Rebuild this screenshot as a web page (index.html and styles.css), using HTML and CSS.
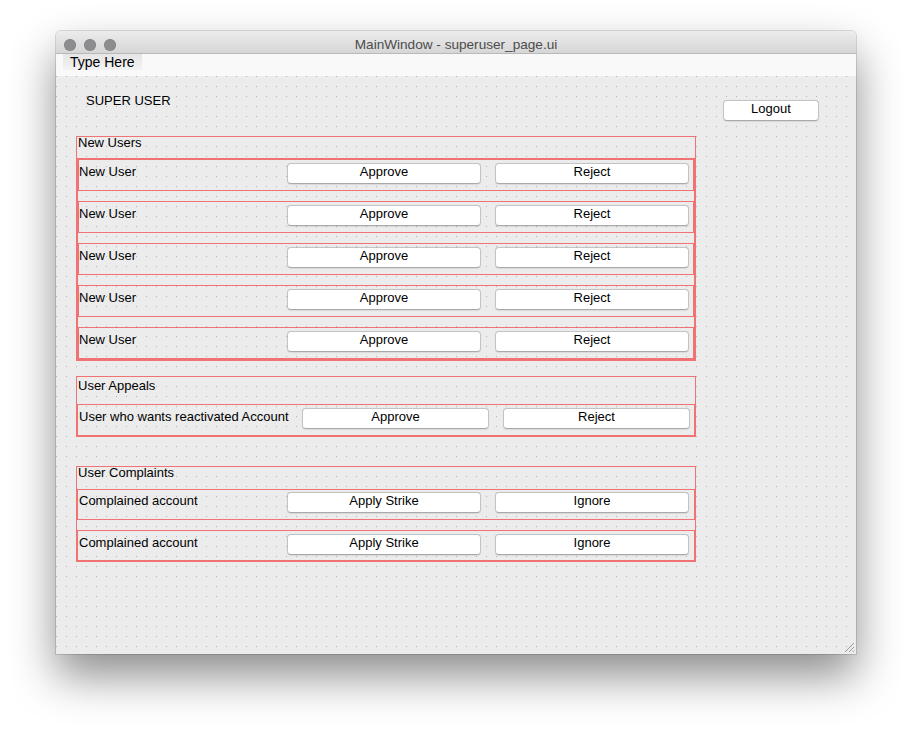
FILE: index.html
```html
<!DOCTYPE html>
<html>
<head>
<meta charset="utf-8">
<title>MainWindow - superuser_page.ui</title>
<link rel="stylesheet" href="styles.css">
</head>
<body>
<div class="desktop">
<div class="window">
  <div class="titlebar">
    <div class="lights"><span class="light"></span><span class="light"></span><span class="light"></span></div>
    <div class="title">MainWindow - superuser_page.ui</div>
    <div></div>
  </div>
  <div class="menubar"><span class="menu-item">Type Here</span></div>
  <div class="content">
    <div class="main-col">
      <div class="heading">SUPER USER</div>

      <section class="group g-new">
        <div class="group-title">New Users</div>
        <div class="vlayout">
          <div class="row"><span class="label">New User</span><button class="btn">Approve</button><button class="btn">Reject</button></div>
          <div class="row"><span class="label">New User</span><button class="btn">Approve</button><button class="btn">Reject</button></div>
          <div class="row"><span class="label">New User</span><button class="btn">Approve</button><button class="btn">Reject</button></div>
          <div class="row"><span class="label">New User</span><button class="btn">Approve</button><button class="btn">Reject</button></div>
          <div class="row"><span class="label">New User</span><button class="btn">Approve</button><button class="btn">Reject</button></div>
        </div>
      </section>

      <section class="group g-appeals">
        <div class="group-title">User Appeals</div>
        <div class="row row-wide"><span class="label">User who wants reactivated Account</span><button class="btn">Approve</button><button class="btn">Reject</button></div>
      </section>

      <section class="group g-complaints">
        <div class="group-title">User Complaints</div>
        <div class="row row-plain row-first"><span class="label">Complained account</span><button class="btn">Apply Strike</button><button class="btn">Ignore</button></div>
        <div class="row row-plain"><span class="label">Complained account</span><button class="btn">Apply Strike</button><button class="btn">Ignore</button></div>
      </section>
    </div>
    <div class="side-col">
      <button class="btn logout">Logout</button>
    </div>
    <svg class="grip" width="12" height="12" viewBox="0 0 12 12">
      <path d="M11 2 L2 11 M11 6 L6 11 M11 9.5 L9.5 11" stroke="#9a9a9a" stroke-width="1" fill="none"/>
    </svg>
  </div>
</div>
</div>
</body>
</html>
```
FILE: styles.css
```css
html, body {
  margin: 0;
  padding: 0;
  background: #ffffff;
}

body {
  font-family: "Liberation Sans", Arial, sans-serif;
  font-size: 13px;
  color: #000;
}

.desktop {
  box-sizing: border-box;
  height: 734px;
  padding: 31px 0 0 56px;
  overflow: hidden;
}

.window {
  width: 800px;
  height: 623px;
  border-radius: 5px 5px 0 0;
  box-shadow: 0 22px 45px rgba(0, 0, 0, 0.45), 0 0 0 1px rgba(0, 0, 0, 0.13);
  display: flex;
  flex-direction: column;
  overflow: hidden;
}

.titlebar {
  height: 23px;
  box-sizing: border-box;
  border-bottom: 1px solid #b9b9b9;
  background: linear-gradient(to bottom, #ececec, #d6d6d6);
  display: grid;
  grid-template-columns: 1fr auto 1fr;
  align-items: center;
}

.lights {
  display: flex;
  gap: 8px;
  padding-left: 8px;
  padding-top: 2px;
  align-items: center;
}

.light {
  width: 12px;
  height: 12px;
  border-radius: 50%;
  background: #8d8d90;
  box-shadow: inset 0 0 0 0.5px rgba(0, 0, 0, 0.15);
}

.title {
  font-size: 13.6px;
  line-height: 22px;
  padding-top: 3px;
  color: #4c4c4c;
}

.menubar {
  height: 22px;
  background: #f9f9f9;
  display: flex;
  align-items: flex-start;
}

.menu-item {
  margin-left: 7px;
  padding: 0 7px;
  height: 16px;
  line-height: 16px;
  font-size: 14px;
  background: linear-gradient(to bottom, #e6e6e6, #f3f3f3);
}

.content {
  position: relative;
  flex: 1;
  display: flex;
  align-items: flex-start;
  background-color: #b3b3b3;
  background-image:
    linear-gradient(to right, transparent 1px, #ececec 1px),
    linear-gradient(to bottom, transparent 1px, #ececec 1px);
  background-size: 10px 10px;
}

.main-col {
  margin-left: 20px;
  width: 620px;
  display: flex;
  flex-direction: column;
}

.heading {
  margin-top: 17px;
  padding-left: 10px;
  line-height: 16px;
  height: 16px;
}

.group {
  border: 1px solid #f07272;
  display: flex;
  flex-direction: column;
}

.g-new { margin-top: 27px; }
.g-appeals { margin-top: 15px; }
.g-complaints { margin-top: 29px; }

.group-title {
  box-sizing: border-box;
  padding-left: 1px;
  line-height: 12px;
}

.g-new .group-title { height: 21px; }
.g-appeals .group-title { height: 27px; padding-top: 3px; }
.g-complaints .group-title { height: 22px; padding-top: 0; }

.vlayout {
  border: 1px solid #f07272;
  display: flex;
  flex-direction: column;
  gap: 10px;
}

.row {
  box-sizing: border-box;
  height: 32px;
  border: 1px solid #f07272;
  display: flex;
  align-items: flex-start;
  gap: 14px;
  padding-right: 4px;
}

.label {
  width: 194px;
  line-height: 16px;
  margin-top: 4px;
  white-space: nowrap;
}

.row .btn {
  width: 194px;
  margin-top: 3px;
}

.row-wide {
  padding-left: 1px;
}

.row-wide .label {
  width: 209px;
  margin-top: 4px;
}

.row-wide .btn {
  width: 187px;
}

.row-plain {
  height: 31px;
  padding-left: 1px;
}

.row-plain .label {
  margin-top: 4px;
}

.row-plain + .row-plain {
  margin-top: 10px;
}

.row-first .btn { margin-top: 2px; }
.row-first .label { margin-top: 3px; }

.btn {
  box-sizing: border-box;
  height: 21px;
  padding: 0 0 4px;
  background: #ffffff;
  border: 1px solid #c3c3c3;
  border-bottom-color: #a9a9a9;
  border-radius: 4px;
  font-family: "Liberation Sans", Arial, sans-serif;
  font-size: 13px;
  line-height: 15px;
  color: #000;
  text-align: center;
  box-shadow: 0 0.5px 1px rgba(0, 0, 0, 0.08);
}

.side-col {
  margin-left: 27px;
  margin-top: 24px;
}

.logout {
  width: 96px;
}

.grip {
  position: absolute;
  right: 1px;
  bottom: 1px;
}
```
